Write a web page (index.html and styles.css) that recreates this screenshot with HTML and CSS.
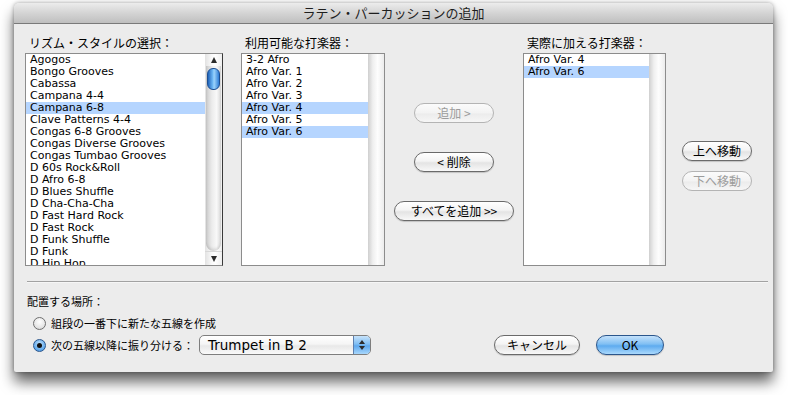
FILE: index.html
```html
<!DOCTYPE html>
<html lang="ja">
<head>
    <meta charset="UTF-8">
    <title>ラテン・パーカッションの追加</title>
    <link rel="stylesheet" href="styles.css">
</head>
<body>
    <div class="window">
        <!-- タイトルバー -->
        <div class="titlebar">ラテン・パーカッションの追加</div>

        <div class="content">
            <div class="pickers">
                <!-- リズム・スタイル -->
                <div class="column">
                    <div class="label">リズム・スタイルの選択：</div>
                    <div class="list list-styles">
                        <div class="rows">
                            <div class="row">Agogos</div>
                            <div class="row">Bongo Grooves</div>
                            <div class="row">Cabassa</div>
                            <div class="row">Campana 4-4</div>
                            <div class="row selected">Campana 6-8</div>
                            <div class="row">Clave Patterns 4-4</div>
                            <div class="row">Congas 6-8 Grooves</div>
                            <div class="row">Congas Diverse Grooves</div>
                            <div class="row">Congas Tumbao Grooves</div>
                            <div class="row">D 60s Rock&amp;Roll</div>
                            <div class="row">D Afro 6-8</div>
                            <div class="row">D Blues Shuffle</div>
                            <div class="row">D Cha-Cha-Cha</div>
                            <div class="row">D Fast Hard Rock</div>
                            <div class="row">D Fast Rock</div>
                            <div class="row">D Funk Shuffle</div>
                            <div class="row">D Funk</div>
                            <div class="row">D Hip Hop</div>
                        </div>
                        <div class="scrollbar">
                            <div class="arrow"><span class="tri-up"></span></div>
                            <div class="scroll-track">
                                <div class="thumb"></div>
                            </div>
                            <div class="arrow arrow-down"><span class="tri-down"></span></div>
                        </div>
                    </div>
                </div>

                <!-- 利用可能な打楽器 -->
                <div class="column col-avail">
                    <div class="label">利用可能な打楽器：</div>
                    <div class="list list-avail">
                        <div class="rows">
                            <div class="row">3-2 Afro</div>
                            <div class="row">Afro Var. 1</div>
                            <div class="row">Afro Var. 2</div>
                            <div class="row">Afro Var. 3</div>
                            <div class="row selected">Afro Var. 4</div>
                            <div class="row">Afro Var. 5</div>
                            <div class="row selected">Afro Var. 6</div>
                        </div>
                        <div class="track"></div>
                    </div>
                </div>

                <!-- 追加・削除 -->
                <div class="transfer">
                    <div class="button disabled btn-add">追加 &gt;</div>
                    <div class="button btn-remove">&lt; 削除</div>
                    <div class="button btn-add-all">すべてを追加 &gt;&gt;</div>
                </div>

                <!-- 実際に加える打楽器 -->
                <div class="column">
                    <div class="label">実際に加える打楽器：</div>
                    <div class="list list-chosen">
                        <div class="rows">
                            <div class="row">Afro Var. 4</div>
                            <div class="row selected">Afro Var. 6</div>
                        </div>
                        <div class="track"></div>
                    </div>
                </div>

                <!-- 並べ替え -->
                <div class="order">
                    <div class="button btn-move">上へ移動</div>
                    <div class="button disabled btn-move">下へ移動</div>
                </div>
            </div>

            <div class="separator"></div>

            <!-- 配置する場所 -->
            <div class="placement">
                <div class="label-plain">配置する場所：</div>
                <div class="radio-row">
                    <span class="radio"></span>
                    <span>組段の一番下に新たな五線を作成</span>
                </div>
                <div class="radio-row">
                    <span class="radio checked"></span>
                    <span>次の五線以降に振り分ける：</span>
                    <div class="popup">
                        <span class="popup-text">Trumpet in B 2</span>
                        <span class="popup-arrows"><span class="tri-up small"></span><span class="tri-down small"></span></span>
                    </div>
                    <div class="actions">
                        <div class="button btn-cancel">キャンセル</div>
                        <div class="button default btn-ok">OK</div>
                    </div>
                </div>
            </div>
        </div>
    </div>
</body>
</html>
```

FILE: styles.css
```css
/* Основа */
html,
body {
    height: 100%;
}

body {
    margin: 0;
    padding-top: 3px;
    box-sizing: border-box;
    background: #fff;
    font-family: "Noto Sans CJK JP", sans-serif;
    font-size: 12px;
    color: #000;
}

/* Окно диалога */
.window {
    margin-left: 14px;
    width: 759px;
    height: 369px;
    background: #ececec;
    border-radius: 5px 5px 2px 2px;
    box-shadow: 0 10px 14px rgba(0, 0, 0, 0.6), 0 0 4px rgba(0, 0, 0, 0.35);
    display: flex;
    flex-direction: column;
    overflow: hidden;
}

.titlebar {
    height: 20px;
    line-height: 20px;
    text-align: center;
    font-size: 13px;
    color: #1e1e1e;
    background: linear-gradient(#ececec, #d4d4d4 50%, #bfbfbf);
    border-bottom: 1px solid #7a7a7a;
}

.content {
    padding-top: 11px;
}

/* Верхняя часть со списками */
.pickers {
    display: flex;
    padding-left: 11px;
}

.column {
    display: flex;
    flex-direction: column;
}

.col-avail {
    margin-left: 18px;
}

.label {
    height: 16px;
    line-height: 16px;
    padding-left: 4px;
    margin-bottom: 2px;
    white-space: nowrap;
}

.list {
    height: 211px;
    border: 1px solid #8c8c8c;
    background: #fff;
    display: flex;
    overflow: hidden;
}

.list-styles {
    width: 196px;
    border-right-color: #3a3a3a;
}

.list-avail {
    width: 142px;
}

.list-chosen {
    width: 141px;
}

.rows {
    flex: 1;
    font-family: "DejaVu Sans", sans-serif;
    font-size: 11px;
    line-height: 12px;
}

.row {
    padding-left: 4px;
    white-space: nowrap;
}

.row.selected {
    background: #b5d5ff;
}

.track {
    width: 16px;
    background: linear-gradient(to right, #cfcfcf, #efefef 30%, #fdfdfd 60%, #ececec);
}

/* Полоса прокрутки */
.scrollbar {
    width: 17px;
    display: flex;
    flex-direction: column;
    background: linear-gradient(to right, #e2e2e2, #fafafa 40%, #fff 60%, #efefef);
}

.arrow {
    height: 12px;
    display: flex;
    align-items: center;
    justify-content: center;
}

.arrow-down {
    height: 13px;
    border-top: 1px solid #d8d8d8;
}

.scroll-track {
    flex: 1;
    margin: 0 1px;
    border-radius: 0 0 8px 8px;
    background: linear-gradient(to right, #cdcdcd, #ececec 40%, #f8f8f8 70%, #dcdcdc);
    box-shadow: inset 0 -2px 3px rgba(0, 0, 0, 0.12);
}

.thumb {
    width: 11px;
    height: 20px;
    margin: 2px auto 0;
    border-radius: 6px;
    border: 1px solid #1d4f93;
    background: linear-gradient(to right, #1f62b8, #72bcf8 45%, #9dd4fc 55%, #2f7dd6);
}

.tri-up {
    width: 0;
    height: 0;
    border-left: 3.5px solid transparent;
    border-right: 3.5px solid transparent;
    border-bottom: 6px solid #2c2c2c;
}

.tri-down {
    width: 0;
    height: 0;
    border-left: 3.5px solid transparent;
    border-right: 3.5px solid transparent;
    border-top: 6px solid #2c2c2c;
}

/* Кнопки Aqua */
.button {
    box-sizing: border-box;
    height: 20px;
    line-height: 18px;
    text-align: center;
    font-size: 12px;
    border: 1px solid #6a6a6a;
    border-radius: 10px;
    background: linear-gradient(#ffffff, #f4f4f4 45%, #e4e4e4 55%, #f8f8f8);
    box-shadow: 0 1px 1px rgba(0, 0, 0, 0.18);
    white-space: nowrap;
}

.button.disabled {
    color: #9c9c9c;
    border-color: #b4b4b4;
    background: linear-gradient(#fbfbfb, #f3f3f3 50%, #ececec 55%, #f6f6f6);
    box-shadow: none;
}

.button.default {
    border-color: #2b568c;
    background: linear-gradient(#c4e1fb, #80bff3 45%, #5eabef 55%, #aad9fd);
}

.transfer {
    width: 138px;
    display: flex;
    flex-direction: column;
    align-items: center;
    gap: 29px;
    padding-top: 68px;
}

.btn-add,
.btn-remove {
    width: 80px;
}

.btn-add-all {
    width: 120px;
}

.order {
    margin-left: 16px;
    display: flex;
    flex-direction: column;
    gap: 10px;
    padding-top: 106px;
}

.btn-move {
    width: 70px;
}

/* Разделитель */
.separator {
    height: 1px;
    margin: 15px 5px 0 13px;
    background: #a2a2a2;
    border-bottom: 1px solid #f6f6f6;
}

/* Нижняя часть */
.placement {
    padding: 10px 109px 0 13px;
    font-size: 11px;
}

.label-plain {
    height: 16px;
    line-height: 16px;
}

.radio-row {
    display: flex;
    align-items: center;
    gap: 5px;
    height: 20px;
    margin-top: 4px;
    padding-left: 6px;
    white-space: nowrap;
}

.radio-row + .radio-row {
    margin-top: 2px;
}

.radio {
    box-sizing: border-box;
    width: 13px;
    height: 13px;
    border-radius: 50%;
    border: 1px solid #6f6f6f;
    background: radial-gradient(circle at 50% 35%, #ffffff, #e6e6e6 60%, #cfcfcf);
    display: flex;
    align-items: center;
    justify-content: center;
}

.radio.checked {
    border-color: #2b568c;
    background: radial-gradient(circle at 50% 35%, #bfe0fb, #5ea8ec 70%, #3a86d6);
}

.radio.checked::after {
    content: "";
    width: 5px;
    height: 5px;
    border-radius: 50%;
    background: #111;
}

.popup {
    box-sizing: border-box;
    width: 172px;
    height: 20px;
    display: flex;
    border: 1px solid #7e7e7e;
    border-radius: 5px;
    overflow: hidden;
    background: linear-gradient(#ffffff, #f5f5f5 45%, #e8e8e8 55%, #fafafa);
}

.popup-text {
    flex: 1;
    padding-left: 8px;
    line-height: 18px;
    font-family: "DejaVu Sans", sans-serif;
    font-size: 13.5px;
}

.popup-arrows {
    width: 16px;
    display: flex;
    flex-direction: column;
    align-items: center;
    justify-content: center;
    gap: 2px;
    border-left: 1px solid #5d7fae;
    background: linear-gradient(#c7e3fb, #7ebdf3 45%, #5ea8ee 55%, #a8d7fc);
}

.tri-up.small {
    border-left-width: 3px;
    border-right-width: 3px;
    border-bottom-width: 4px;
}

.tri-down.small {
    border-left-width: 3px;
    border-right-width: 3px;
    border-top-width: 4px;
}

.actions {
    margin-left: auto;
    display: flex;
    gap: 16px;
}

.btn-cancel {
    width: 86px;
}

.btn-ok {
    width: 68px;
}
```
